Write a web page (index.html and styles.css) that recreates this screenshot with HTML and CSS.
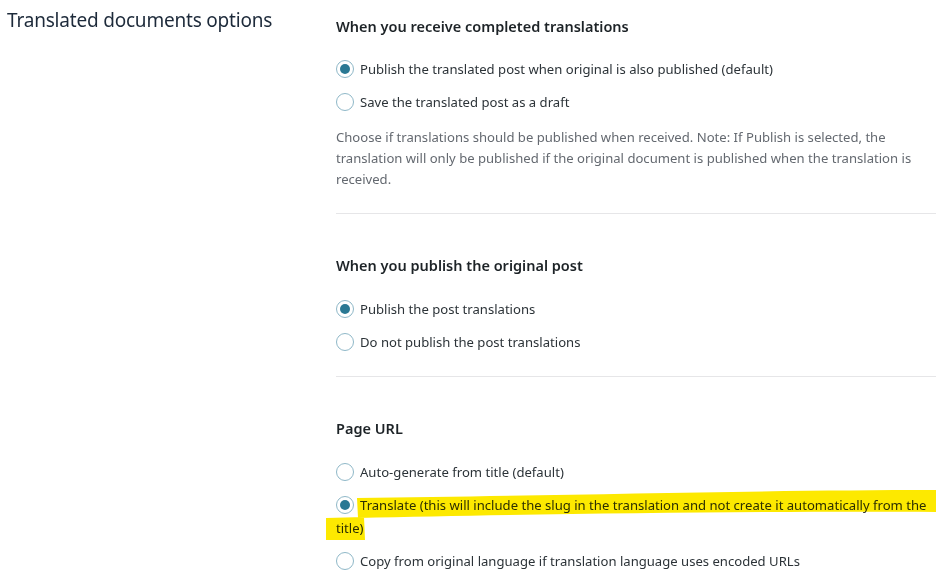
FILE: index.html
```html
<!DOCTYPE html>
<html lang="en">
<head>
<meta charset="utf-8">
<title>Translated documents options</title>
<link rel="stylesheet" href="styles.css">
</head>
<body>
<div class="page">
  <div class="side">
    <h2 class="side-title">Translated documents options</h2>
  </div>
  <div class="content">
    <section class="group">
      <h3 class="group-title">When you receive completed translations</h3>
      <label class="opt"><span class="radio checked"></span>Publish the translated post when original is also published (default)</label>
      <label class="opt"><span class="radio"></span>Save the translated post as a draft</label>
      <p class="desc">Choose if translations should be published when received. Note: If Publish is selected, the translation will only be published if the original document is published when the translation is received.</p>
    </section>
    <section class="group">
      <h3 class="group-title">When you publish the original post</h3>
      <label class="opt"><span class="radio checked"></span>Publish the post translations</label>
      <label class="opt"><span class="radio"></span>Do not publish the post translations</label>
    </section>
    <section class="group last">
      <h3 class="group-title">Page URL</h3>
      <label class="opt"><span class="radio"></span>Auto-generate from title (default)</label>
      <label class="opt marked"><svg class="marker" width="640" height="60" viewBox="0 0 640 60" aria-hidden="true"><path d="M21 4 C 200 2, 420 -4, 602 -4 L 602 18 C 420 17, 200 20, 22 24 Z M-10 24 L 28 23 L 29 46 L -10 46 Z" fill="#fde900"/></svg><span class="radio checked"></span>Translate (this will include the slug in the translation and not create it automatically from the title)</label>
      <label class="opt"><span class="radio"></span>Copy from original language if translation language uses encoded URLs</label>
    </section>
  </div>
</div>
</body>
</html>
```
FILE: styles.css
```css
html, body {
  margin: 0;
  padding: 0;
  background: #ffffff;
  overflow: hidden;
}
body {
  font-family: "Noto Sans", "Open Sans", sans-serif;
  color: #2c3338;
  width: 936px;
  height: 581px;
}
.page {
  display: flex;
  align-items: flex-start;
}
.side {
  width: 329px;
  padding-left: 7px;
  padding-top: 6px;
  flex: none;
}
.side-title {
  margin: 0;
  font-size: 19px;
  line-height: 28px;
  font-weight: 400;
  color: #1d2a3a;
  letter-spacing: -0.2px;
}
.content {
  width: 605px;
  flex: none;
  padding-top: 16px;
}
.group {
  padding: 41px 0 23px;
  border-bottom: 1px solid #e6e6e8;
}
.group + .group {
  padding-bottom: 22px;
}
.group:first-child {
  padding-top: 0;
}
.group.last {
  border-bottom: none;
}
.group-title {
  margin: 0 0 22px;
  font-size: 14.5px;
  line-height: 20px;
  font-weight: 600;
  color: #1d2327;
}
.group + .group .group-title {
  margin-bottom: 23px;
}
.opt {
  display: block;
  position: relative;
  font-size: 13.1px;
  line-height: 23px;
  margin-bottom: 10px;
  color: #2c3338;
}
.group .opt:nth-last-child(1) {
  margin-bottom: 0;
}
.radio {
  display: inline-block;
  width: 16px;
  height: 16px;
  border: 1px solid #8fb8c8;
  border-radius: 50%;
  vertical-align: -4px;
  margin-right: 6px;
  box-sizing: content-box;
  position: relative;
  background: #fff;
}
.radio.checked::after {
  content: "";
  position: absolute;
  left: 3px;
  top: 3px;
  width: 10px;
  height: 10px;
  border-radius: 50%;
  background: #2a7893;
}
.marker {
  position: absolute;
  left: 0;
  top: 0;
  overflow: visible;
  mix-blend-mode: multiply;
  pointer-events: none;
}
.desc {
  margin: 13px 0 0;
  font-size: 13.1px;
  line-height: 21px;
  color: #646970;
}
```
